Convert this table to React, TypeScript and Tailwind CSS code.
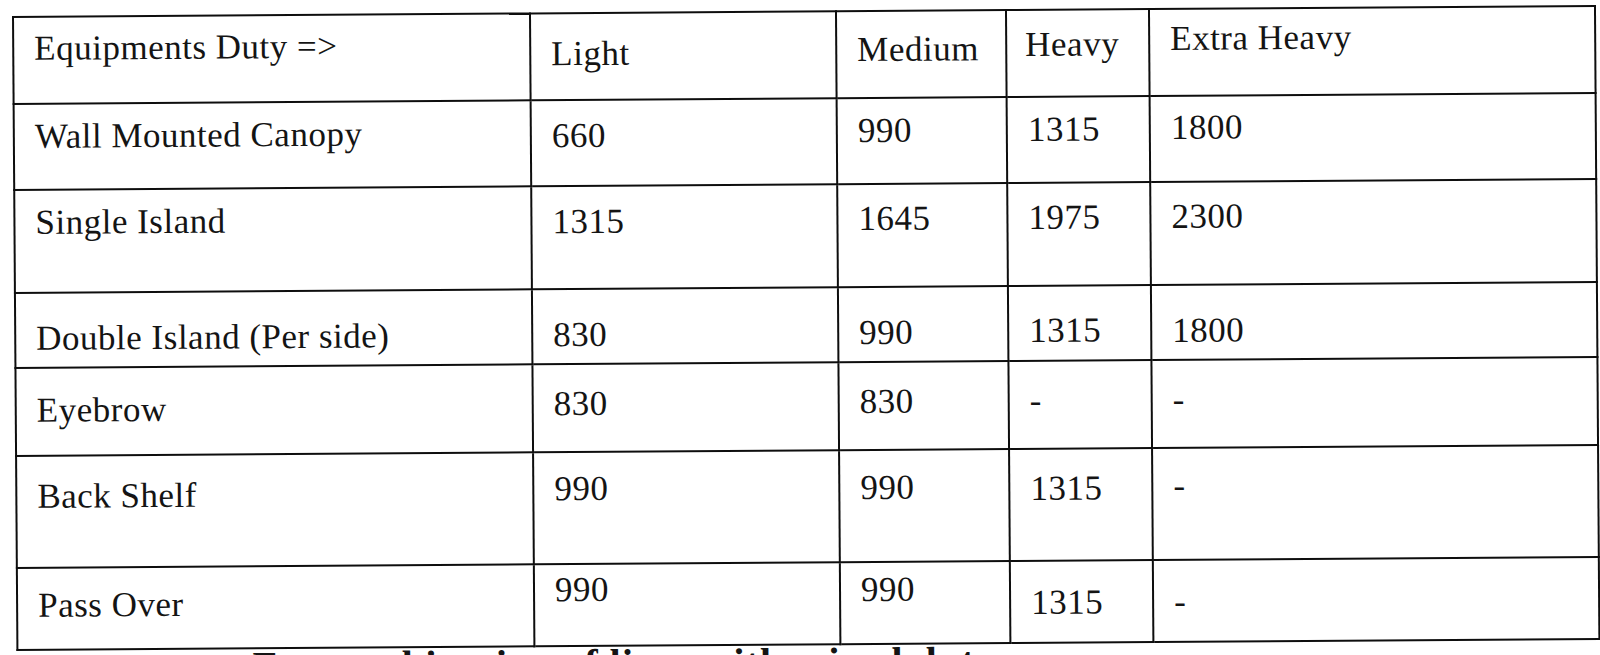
import React from 'react';

interface Row {
  name: string,
  values: string[],
  height: string,
  pads: string[]
}

// pads: first entry for the name cell, then one per value cell
const rows: Row[] = [
  { name: 'Wall Mounted Canopy', values: ['660', '990', '1315', '1800'], height: 'h-[86px]', pads: ['pt-[12px]', 'pt-[15px]', 'pt-[12px]', 'pt-[12px]', 'pt-[11px]'] },
  { name: 'Single Island', values: ['1315', '1645', '1975', '2300'], height: 'h-[103px]', pads: ['pt-[12px]', 'pt-[15px]', 'pt-[14px]', 'pt-[14px]', 'pt-[14px]'] },
  { name: 'Double Island (Per side)', values: ['830', '990', '1315', '1800'], height: 'h-[75px]', pads: ['pt-[25px]', 'pt-[25px]', 'pt-[25px]', 'pt-[24px]', 'pt-[25px]'] },
  { name: 'Eyebrow', values: ['830', '830', '-', '-'], height: 'h-[88px]', pads: ['pt-[22px]', 'pt-[19px]', 'pt-[19px]', 'pt-[19px]', 'pt-[19px]'] },
  { name: 'Back Shelf', values: ['990', '990', '1315', '-'], height: 'h-[112px]', pads: ['pt-[20px]', 'pt-[16px]', 'pt-[17px]', 'pt-[19px]', 'pt-[17px]'] },
  { name: 'Pass Over', values: ['990', '990', '1315', '-'], height: 'h-[82px]', pads: ['pt-[17px]', 'pt-[5px]', 'pt-[7px]', 'pt-[21px]', 'pt-[21px]'] },
];

const cell = 'border-2 border-[#0e0e0e] align-top pl-5 font-normal text-left';

function DutyTable() {
  return (
    <div className="h-[655px] w-[1600px] overflow-hidden bg-white text-[#141414] font-['Liberation_Serif','Times_New_Roman',serif]">
      <div className="pl-[12px] pt-[16px]">
        <div className="rotate-[-0.4deg] origin-top-left">
          <table className="w-[1582px] table-fixed border-collapse text-[35px] leading-[40px] tracking-[0.5px]">
            <colgroup>
              <col className="w-[517px]" />
              <col className="w-[306px]" />
              <col className="w-[170px]" />
              <col className="w-[143px]" />
              <col className="w-[446px]" />
            </colgroup>
            <thead>
              <tr className="h-[87px]">
                <th className={cell + ' pt-[11px]'}>Equipments Duty =&gt;</th>
                <th className={cell + ' pt-[20px] pl-4'}>Light</th>
                <th className={cell + ' pt-[18px]'}>Medium</th>
                <th className={cell + ' pt-[14px] pl-[18px]'}>Heavy</th>
                <th className={cell + ' pt-[9px]'}>Extra Heavy</th>
              </tr>
            </thead>
            <tbody>
              {rows.map((row) => (
                <tr key={row.name} className={row.height}>
                  <td className={cell + ' ' + row.pads[0]}>{row.name}</td>
                  {row.values.map((v, i) => (
                    <td key={i} className={cell + ' ' + row.pads[i + 1] + (i === 0 ? ' pl-4' : '')}>{v}</td>
                  ))}
                </tr>
              ))}
            </tbody>
          </table>
          <p className="-mt-[3px] pl-[236px] text-[40px] font-bold leading-[40px] tracking-[1px] whitespace-nowrap">
            For combination of lines with mixed duty
          </p>
        </div>
      </div>
    </div>
  );
}

export default function App() {
  return <DutyTable />;
}
